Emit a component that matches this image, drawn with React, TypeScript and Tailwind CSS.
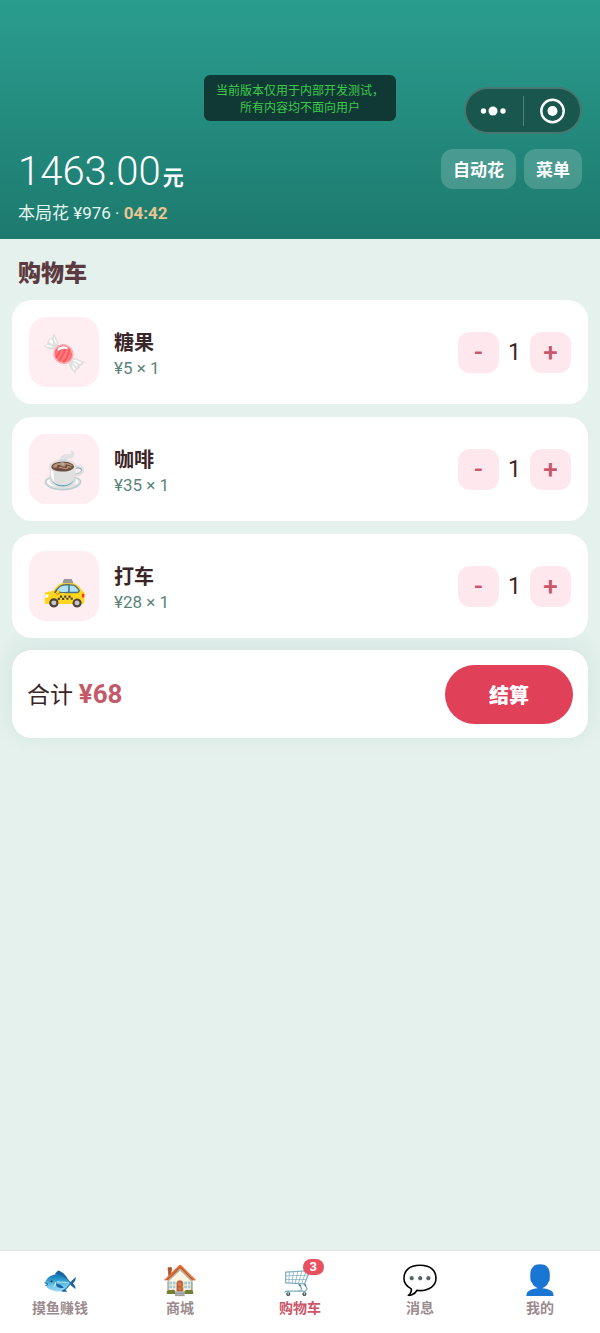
import React, { useState } from "react";

type Item = { icon: string; name: string; price: number };

const items: Item[] = [
  { icon: "🍬", name: "糖果", price: 5 },
  { icon: "☕", name: "咖啡", price: 35 },
  { icon: "🚕", name: "打车", price: 28 },
];

const tabs = [
  { icon: "🐟", label: "摸鱼赚钱" },
  { icon: "🏠", label: "商城" },
  { icon: "🛒", label: "购物车" },
  { icon: "💬", label: "消息" },
  { icon: "👤", label: "我的" },
];

const Capsule: React.FC = () => (
  <div className="flex items-center h-[47px] w-[118px] rounded-full border-2 border-white/20 bg-[#18564e]">
    <button aria-label="更多" className="flex flex-1 items-center justify-center">
      <svg width="28" height="12" viewBox="0 0 28 12" fill="#fff">
        <circle cx="3.5" cy="6" r="2.7" />
        <circle cx="13" cy="6" r="4.5" />
        <circle cx="23" cy="6" r="2.7" />
      </svg>
    </button>
    <span className="w-px h-[30px] bg-white/25" />
    <button aria-label="关闭" className="flex flex-1 items-center justify-center">
      <svg width="26" height="26" viewBox="0 0 26 26" fill="none">
        <circle cx="13.5" cy="13" r="11.2" stroke="#fff" strokeWidth="2.4" />
        <circle cx="13.5" cy="13" r="5" fill="#fff" />
      </svg>
    </button>
  </div>
);

const Header: React.FC = () => (
  <header className="px-[18px] pt-[75px] pb-3 bg-linear-to-b from-[#2a9d8f] to-[#1d7a6e] text-white">
    <div className="grid grid-cols-[1fr_auto_1fr] items-start">
      <p className="col-start-2 px-3 pt-2 pb-1 rounded-md bg-[#103936] text-center text-[12px] leading-[17px] text-[#3ec94a]">
        当前版本仅用于内部开发测试，
        <br />
        所有内容均不面向用户
      </p>
      <div className="flex justify-end pt-3">
        <Capsule />
      </div>
    </div>
    <div className="flex items-start justify-between pt-[15px]">
      <div>
        <p className="flex items-baseline gap-[2px]">
          <span className="text-[40px] leading-[46px] font-light">1463.00</span>
          <span className="text-[21px] leading-none font-bold">元</span>
        </p>
        <p className="pt-1 text-[17px] leading-[28px] text-[#e6f5f1]">
          本局花 ¥976 · <b className="text-[#e9c58f]">04:42</b>
        </p>
      </div>
      <div className="flex gap-2">
        <button className="h-10 px-3 pt-1 rounded-xl bg-white/18 text-[17px] font-bold">自动花</button>
        <button className="h-10 px-3 pt-1 rounded-xl bg-white/18 text-[17px] font-bold">菜单</button>
      </div>
    </div>
  </header>
);

type StepProps = { label: string; sign: string; onClick: () => void };

const StepButton: React.FC<StepProps> = ({ label, sign, onClick }) => (
  <button
    aria-label={label}
    onClick={onClick}
    className="size-[41px] rounded-xl bg-[#ffe8ed] text-[26px] leading-[41px] font-medium text-[#c9566a]"
  >
    {sign}
  </button>
);

export default function App() {
  const [counts, setCounts] = useState([1, 1, 1]);
  const total = items.reduce((sum, item, i) => sum + item.price * counts[i], 0);

  const change = (index: number, delta: number) =>
    setCounts(counts.map((n, i) => (i === index ? Math.max(0, n + delta) : n)));

  return (
    <div className="flex flex-col min-h-screen bg-[#e4f1ed] font-[Roboto,'Noto_Sans_CJK_SC',sans-serif] text-[#3a2529]">
      <Header />
      <main className="flex-1 px-3">
        <h1 className="px-[6px] pt-[18px] pb-[10px] text-[23px] leading-[33px] font-black text-[#5c3a40]">购物车</h1>
        <ul className="flex flex-col gap-[13px]">
          {items.map((item, i) => (
            <li key={item.name} className="flex items-center h-[104px] px-[17px] rounded-[20px] bg-white">
              <span className="flex items-center justify-center size-[70px] pt-1 rounded-[17px] bg-[#ffeef1] text-[36px]">
                {item.icon}
              </span>
              <div className="flex-1 pt-[6px] pl-[15px]">
                <h2 className="text-[20px] leading-[26px] font-bold">{item.name}</h2>
                <p className="text-[17px] leading-[25px] text-[#5a8478]">
                  ¥{item.price} × {counts[i]}
                </p>
              </div>
              <div className="flex items-center">
                <StepButton label="减少" sign="-" onClick={() => change(i, -1)} />
                <span className="w-[31px] pt-[2px] text-center text-[23px]">{counts[i]}</span>
                <StepButton label="增加" sign="+" onClick={() => change(i, 1)} />
              </div>
            </li>
          ))}
        </ul>
        <section className="flex items-center justify-between h-[88px] mt-3 px-[15px] rounded-[20px] bg-white shadow-[0_-4px_24px_rgba(30,90,75,0.08)]">
          <p className="text-[23px]">
            合计 <b className="text-[26px] text-[#c45a68]">¥{total}</b>
          </p>
          <button className="h-[59px] px-11 pt-1 rounded-full bg-[#e04058] text-[20px] font-black text-white">结算</button>
        </section>
      </main>
      <nav className="grid grid-cols-5 h-[83px] border-t border-[#e8e4e5] bg-white">
        {tabs.map((tab, i) => (
          <a
            key={tab.label}
            href="#"
            className={`flex flex-col items-center pt-3 text-[14px] font-bold ${i === 2 ? "text-[#cc5569]" : "text-[#9b8a8e]"}`}
          >
            <span className="relative text-[29px] leading-[34px] font-normal">
              {tab.icon}
              {i === 2 && (
                <span className="absolute -top-1 -right-[6px] px-[7px] rounded-full bg-[#e8505f] text-[13px] leading-4 font-bold text-white">
                  {counts.reduce((a, b) => a + b, 0)}
                </span>
              )}
            </span>
            <span className="leading-[22px]">{tab.label}</span>
          </a>
        ))}
      </nav>
    </div>
  );
}
